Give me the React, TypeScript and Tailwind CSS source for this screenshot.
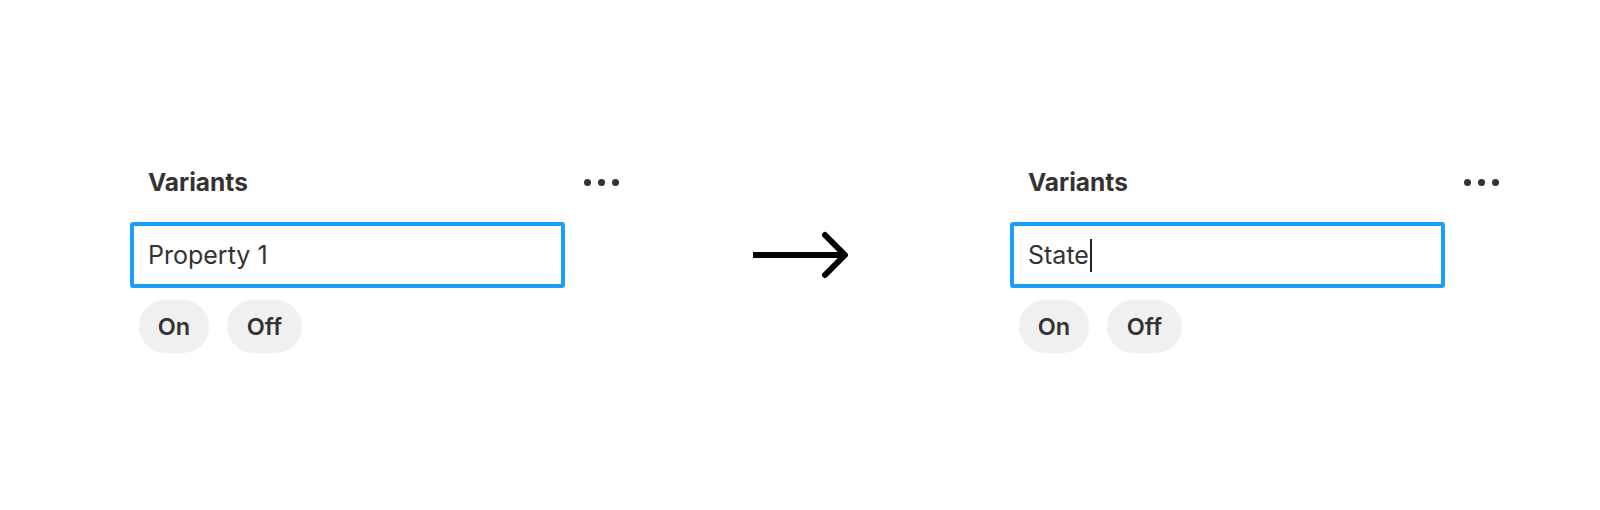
import React from 'react';

type PanelProps = {
  value: string;
  caret?: boolean;
};

const MoreDots: React.FC = () => (
  <div className="flex items-center gap-[7px] pr-[1px]">
    <span className="w-[7px] h-[7px] rounded-full bg-[#333333]" />
    <span className="w-[7px] h-[7px] rounded-full bg-[#333333]" />
    <span className="w-[7px] h-[7px] rounded-full bg-[#333333]" />
  </div>
);

const VariantsPanel: React.FC<PanelProps> = ({ value, caret }) => {
  return (
    <div className="w-[490px] flex flex-col">
      {/* Header */}
      <div className="h-[40px] flex items-center justify-between pl-[18px]">
        <h3 className="text-[24.5px] font-bold text-[#333333] leading-none">Variants</h3>
        <MoreDots />
      </div>

      {/* Property name field */}
      <div className="mt-[20px] w-[435px] h-[66px] border-[4px] border-[#18a0fb] rounded-[3px] flex items-center pl-[14px]">
        <span className="text-[25px] text-[#333333] leading-none">{value}</span>
        {caret && <span className="ml-[1px] w-[2px] h-[33px] bg-[#222222]" />}
      </div>

      {/* Values */}
      <div className="mt-[12px] ml-[9px] flex gap-[18px]">
        <span className="w-[70px] h-[53px] rounded-full bg-[#f0f0f0] flex items-center justify-center text-[23.5px] font-semibold text-[#333333]">
          On
        </span>
        <span className="w-[75px] h-[53px] rounded-full bg-[#f0f0f0] flex items-center justify-center text-[23.5px] font-semibold text-[#333333]">
          Off
        </span>
      </div>
    </div>
  );
};

const App: React.FC = () => {
  return (
    <div className="w-[1600px] h-[510px] bg-white font-['Inter',sans-serif] flex items-start pt-[162px]">
      <div className="ml-[130px]">
        <VariantsPanel value="Property 1" />
      </div>

      {/* Arrow */}
      <svg
        className="ml-[130px] mt-[68px]"
        width="100"
        height="50"
        viewBox="0 0 100 50"
        fill="none"
        stroke="#000000"
        strokeWidth="6"
      >
        <path d="M3 25H94" />
        <path d="M75 5L95 25L75 45" strokeLinecap="round" strokeLinejoin="round" />
      </svg>

      <div className="ml-[160px]">
        <VariantsPanel value="State" caret />
      </div>
    </div>
  );
};

export default App;
